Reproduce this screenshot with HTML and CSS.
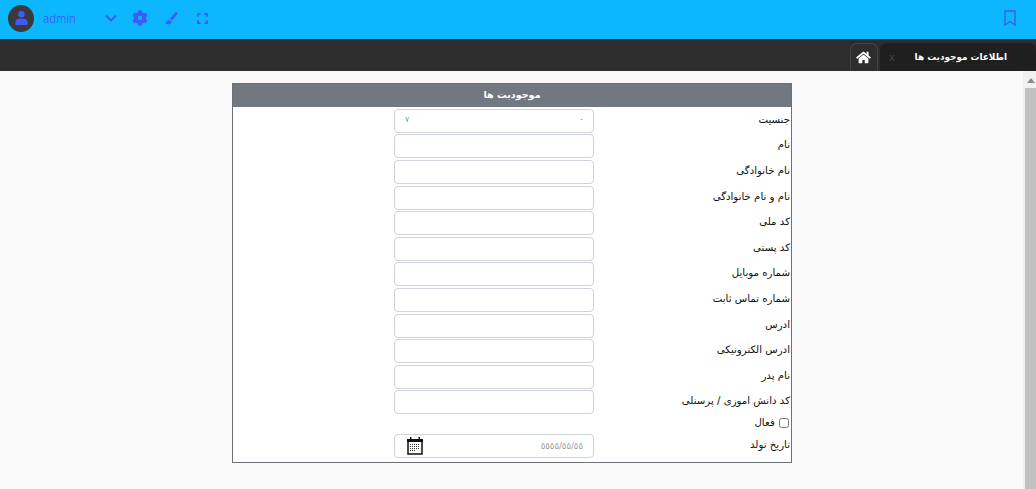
FILE: index.html
```html
<!DOCTYPE html>
<html lang="fa">
<head>
  <meta charset="UTF-8">
  <title>موجودیت ها</title>
  <link rel="stylesheet" href="styles.css">
</head>
<body>
  <header class="topbar">
    <div class="user">
      <span class="avatar">
        <svg width="13" height="14" viewBox="0 0 448 512"><path fill="#3d5afe" d="M224 240a120 120 0 1 0 0-240 120 120 0 0 0 0 240zm90 40H134C60 280 0 340 0 414v50c0 26 22 48 48 48h352c26 0 48-22 48-48v-50c0-74-60-134-134-134z"/></svg>
      </span>
      <span class="username">admin</span>
    </div>
    <div class="tools">
      <svg class="chevron" width="12" height="8" viewBox="0 0 12 8"><path d="M1 1.500l5 5 5-5" fill="none" stroke="#3d5afe" stroke-width="2"/></svg>
      <svg class="gear" width="16" height="16" viewBox="0 0 512 512"><path fill="#3d5afe" d="M487 316l-43-25a194 194 0 0 0 0-70l43-25c5-3 7-9 5-14-11-36-30-68-55-95-4-4-10-5-15-2l-43 25a190 190 0 0 0-60-35V25c0-6-4-11-9-12-37-8-75-8-110 0-6 1-10 6-10 12v50a196 196 0 0 0-60 35L87 85c-5-3-11-2-15 2-25 27-44 59-55 95-2 5 0 11 5 14l43 25a194 194 0 0 0 0 70l-43 25c-5 3-7 9-5 14 11 36 30 68 55 95 4 4 10 5 15 2l43-25c18 15 38 27 60 35v50c0 6 4 11 10 12 37 8 75 8 110 0 5-1 9-6 9-12v-50c22-8 42-20 60-35l43 25c5 3 11 2 15-2 25-27 44-59 55-95 2-5 0-11-5-14zM255 326a70 70 0 1 1 0-140 70 70 0 0 1 0 140z"/></svg>
      <svg class="brush" width="13" height="13" viewBox="0 0 512 512"><path fill="#3d5afe" d="M167 302L396 16c20-23 55-22 78-2 24 21 27 55 9 78L277 346c-5-40-70-80-110-44zM144 324c-50 3-78 34-90 66-6 17-20 40-54 46 38 36 117 70 192 40 46-18 72-58 64-96-6-30-60-60-112-56z"/></svg>
      <svg class="expand" width="11" height="11" viewBox="0 0 12 12"><path d="M1 4V1h3M8 1h3v3M11 8v3H8M4 11H1V8" fill="none" stroke="#3d5afe" stroke-width="1.800"/></svg>
    </div>
    <svg class="bookmark" width="12" height="16" viewBox="0 0 12 16"><path d="M1 1h10v14l-5-3.500L1 15z" fill="none" stroke="#3d5afe" stroke-width="1.400"/></svg>
  </header>

  <nav class="tabbar">
    <div class="tab active">
      <span class="tab-close">x</span>
      <span class="tab-title">اطلاعات موجودیت ها</span>
    </div>
    <div class="tab home">
      <svg width="15" height="13" viewBox="0 0 576 512"><path fill="#fff" d="M280 148L96 300v164c0 9 7 16 16 16l112-1c9 0 16-7 16-16v-95c0-9 7-16 16-16h64c9 0 16 7 16 16v95c0 9 7 16 16 16l112 1c9 0 16-7 16-16V300L296 148c-5-4-11-4-16 0zM572 251l-84-69V44c0-7-5-12-12-12h-56c-7 0-12 5-12 12v72l-89-74c-18-14-44-14-62 0L4 251c-5 4-6 12-2 17l26 31c4 5 12 6 17 2L280 107c5-4 11-4 16 0l235 194c5 4 13 3 17-2l26-31c4-5 3-13-2-17z"/></svg>
    </div>
  </nav>

  <div class="page">
    <main class="content">
      <form class="panel">
        <h1 class="panel-title">موجودیت ها</h1>
        <div class="rows">
          <label class="row">
            <span class="field-label">جنسیت</span>
            <span class="select"><span class="dash">-</span><span class="arrow">۷</span></span>
          </label>
          <label class="row"><span class="field-label">نام</span><input class="field" type="text"></label>
          <label class="row"><span class="field-label">نام خانوادگی</span><input class="field" type="text"></label>
          <label class="row"><span class="field-label">نام و نام خانوادگی</span><input class="field" type="text"></label>
          <label class="row"><span class="field-label">کد ملی</span><input class="field" type="text"></label>
          <label class="row"><span class="field-label">کد پستی</span><input class="field" type="text"></label>
          <label class="row"><span class="field-label">شماره موبایل</span><input class="field" type="text"></label>
          <label class="row"><span class="field-label">شماره تماس ثابت</span><input class="field" type="text"></label>
          <label class="row"><span class="field-label">ادرس</span><input class="field" type="text"></label>
          <label class="row"><span class="field-label">ادرس الکترونیکی</span><input class="field" type="text"></label>
          <label class="row"><span class="field-label">نام پدر</span><input class="field" type="text"></label>
          <label class="row"><span class="field-label">کد دانش اموزی / پرسنلی</span><input class="field" type="text"></label>
          <label class="row row-check">
            <span class="field-label"><input class="check" type="checkbox"> فعال</span>
          </label>
          <label class="row">
            <span class="field-label">تاریخ تولد</span>
            <span class="date">
              <span class="placeholder">٥٥٥٥/٥٥/٥٥</span>
              <svg width="16" height="18" viewBox="0 0 16 18">
                <path d="M1 3h14v14H1z" fill="#fff" stroke="#111" stroke-width="1.500"/>
                <path d="M0 2h16v3H0zM3 0h1.500v3H3zM11.500 0H13v3h-1.500z" fill="#111"/>
                <path d="M3 7.500h10M3 9.500h10M3 11.500h10M3 13.500h6" stroke="#333" stroke-dasharray="1 1"/>
              </svg>
            </span>
          </label>
        </div>
      </form>
    </main>
    <div class="scrollbar">
      <span class="scroll-up"></span>
      <span class="scroll-thumb"></span>
    </div>
  </div>
</body>
</html>
```
FILE: styles.css
```css
* {
  box-sizing: border-box;
}
html, body {
  height: 100%;
}
body {
  margin: 0;
  display: flex;
  flex-direction: column;
  overflow: hidden;
  font-family: "DejaVu Sans", sans-serif;
  font-size: 10.200px;
  color: #111;
  background: #f9f9f9;
}
.topbar {
  height: 39px;
  flex: none;
  display: flex;
  align-items: center;
  padding: 0 20px 3px 8px;
  background: #0db7fd;
}
.user {
  display: flex;
  align-items: center;
  width: 97px;
}
.avatar {
  width: 26px;
  height: 27px;
  border-radius: 50%;
  background: #3a3a3a;
  display: flex;
  align-items: center;
  justify-content: center;
}
.username {
  margin: 2px 0 0 9px;
  color: #3d5afe;
  font-family: Inter, sans-serif;
  font-size: 11.500px;
  font-weight: 300;
}
.tools {
  display: flex;
  align-items: center;
  gap: 15px;
}
.brush {
  margin-left: 2px;
}
.expand {
  margin-left: 4px;
}
.bookmark {
  margin-left: auto;
}
.tabbar {
  height: 32px;
  flex: none;
  display: flex;
  flex-direction: row-reverse;
  align-items: flex-end;
  gap: 2px;
  background: #2d2d2d;
}
.tab {
  height: 28px;
  display: flex;
  align-items: center;
  border-radius: 7px 7px 0 0;
}
.tab.active {
  width: 156px;
  padding: 0 29px 0 9px;
  justify-content: space-between;
  background: #1f1f1f;
  color: #fff;
  font-weight: bold;
  font-size: 8.900px;
}
.tab-close {
  color: #444;
  font-weight: normal;
  font-size: 10px;
}
.tab.home {
  width: 28px;
  padding-right: 2px;
  justify-content: center;
  border: 1px solid #444;
  border-bottom: 0;
}
.page {
  flex: 1;
  display: flex;
  min-height: 0;
}
.content {
  flex: 1;
  padding: 12px 0 0 1px;
  display: flex;
  justify-content: center;
}
.panel {
  width: 560px;
  height: 380px;
  border: 1px solid #6c7278;
  background: #fff;
  direction: rtl;
}
.panel-title {
  margin: 0;
  height: 23px;
  line-height: 22px;
  text-align: center;
  font-size: 9.600px;
  font-weight: bold;
  color: #fff;
  background: #72787f;
}
.rows {
  padding-top: 1px;
}
.row {
  height: 25.600px;
  display: flex;
  align-items: center;
  padding-right: 1px;
}
.field-label {
  width: 196px;
  flex: none;
  padding-bottom: 3px;
}
.field, .select, .date {
  width: 200px;
  height: 24px;
  border: 1px solid #ced4da;
  border-radius: 4px;
  background: #fff;
}
.field {
  padding: 0 6px;
}
.select, .date {
  display: flex;
  align-items: center;
  justify-content: space-between;
}
.select {
  padding: 0 10px 2px;
  color: #6d8fc7;
  font-size: 8px;
}
.dash {
  color: #999;
  font-size: 8px;
}
.date {
  padding: 0 10px 0 12px;
}
.placeholder {
  color: #999;
  font-size: 8.500px;
}
.check {
  margin: 0 1px 0 1px;
  width: 10px;
  height: 10px;
  vertical-align: middle;
}
.row-check {
  height: 18.500px;
}
.scrollbar {
  width: 13px;
  flex: none;
  background: #f1f1f1;
  display: flex;
  flex-direction: column;
  align-items: flex-end;
}
.scroll-up {
  margin: 7px 1px 0 0;
  border: 4.500px solid transparent;
  border-top: 0;
  border-bottom: 5px solid #8a8a8a;
}
.scroll-thumb {
  width: 11px;
  flex: 1;
  margin-top: 5px;
  background: #c1c1c1;
}
```
